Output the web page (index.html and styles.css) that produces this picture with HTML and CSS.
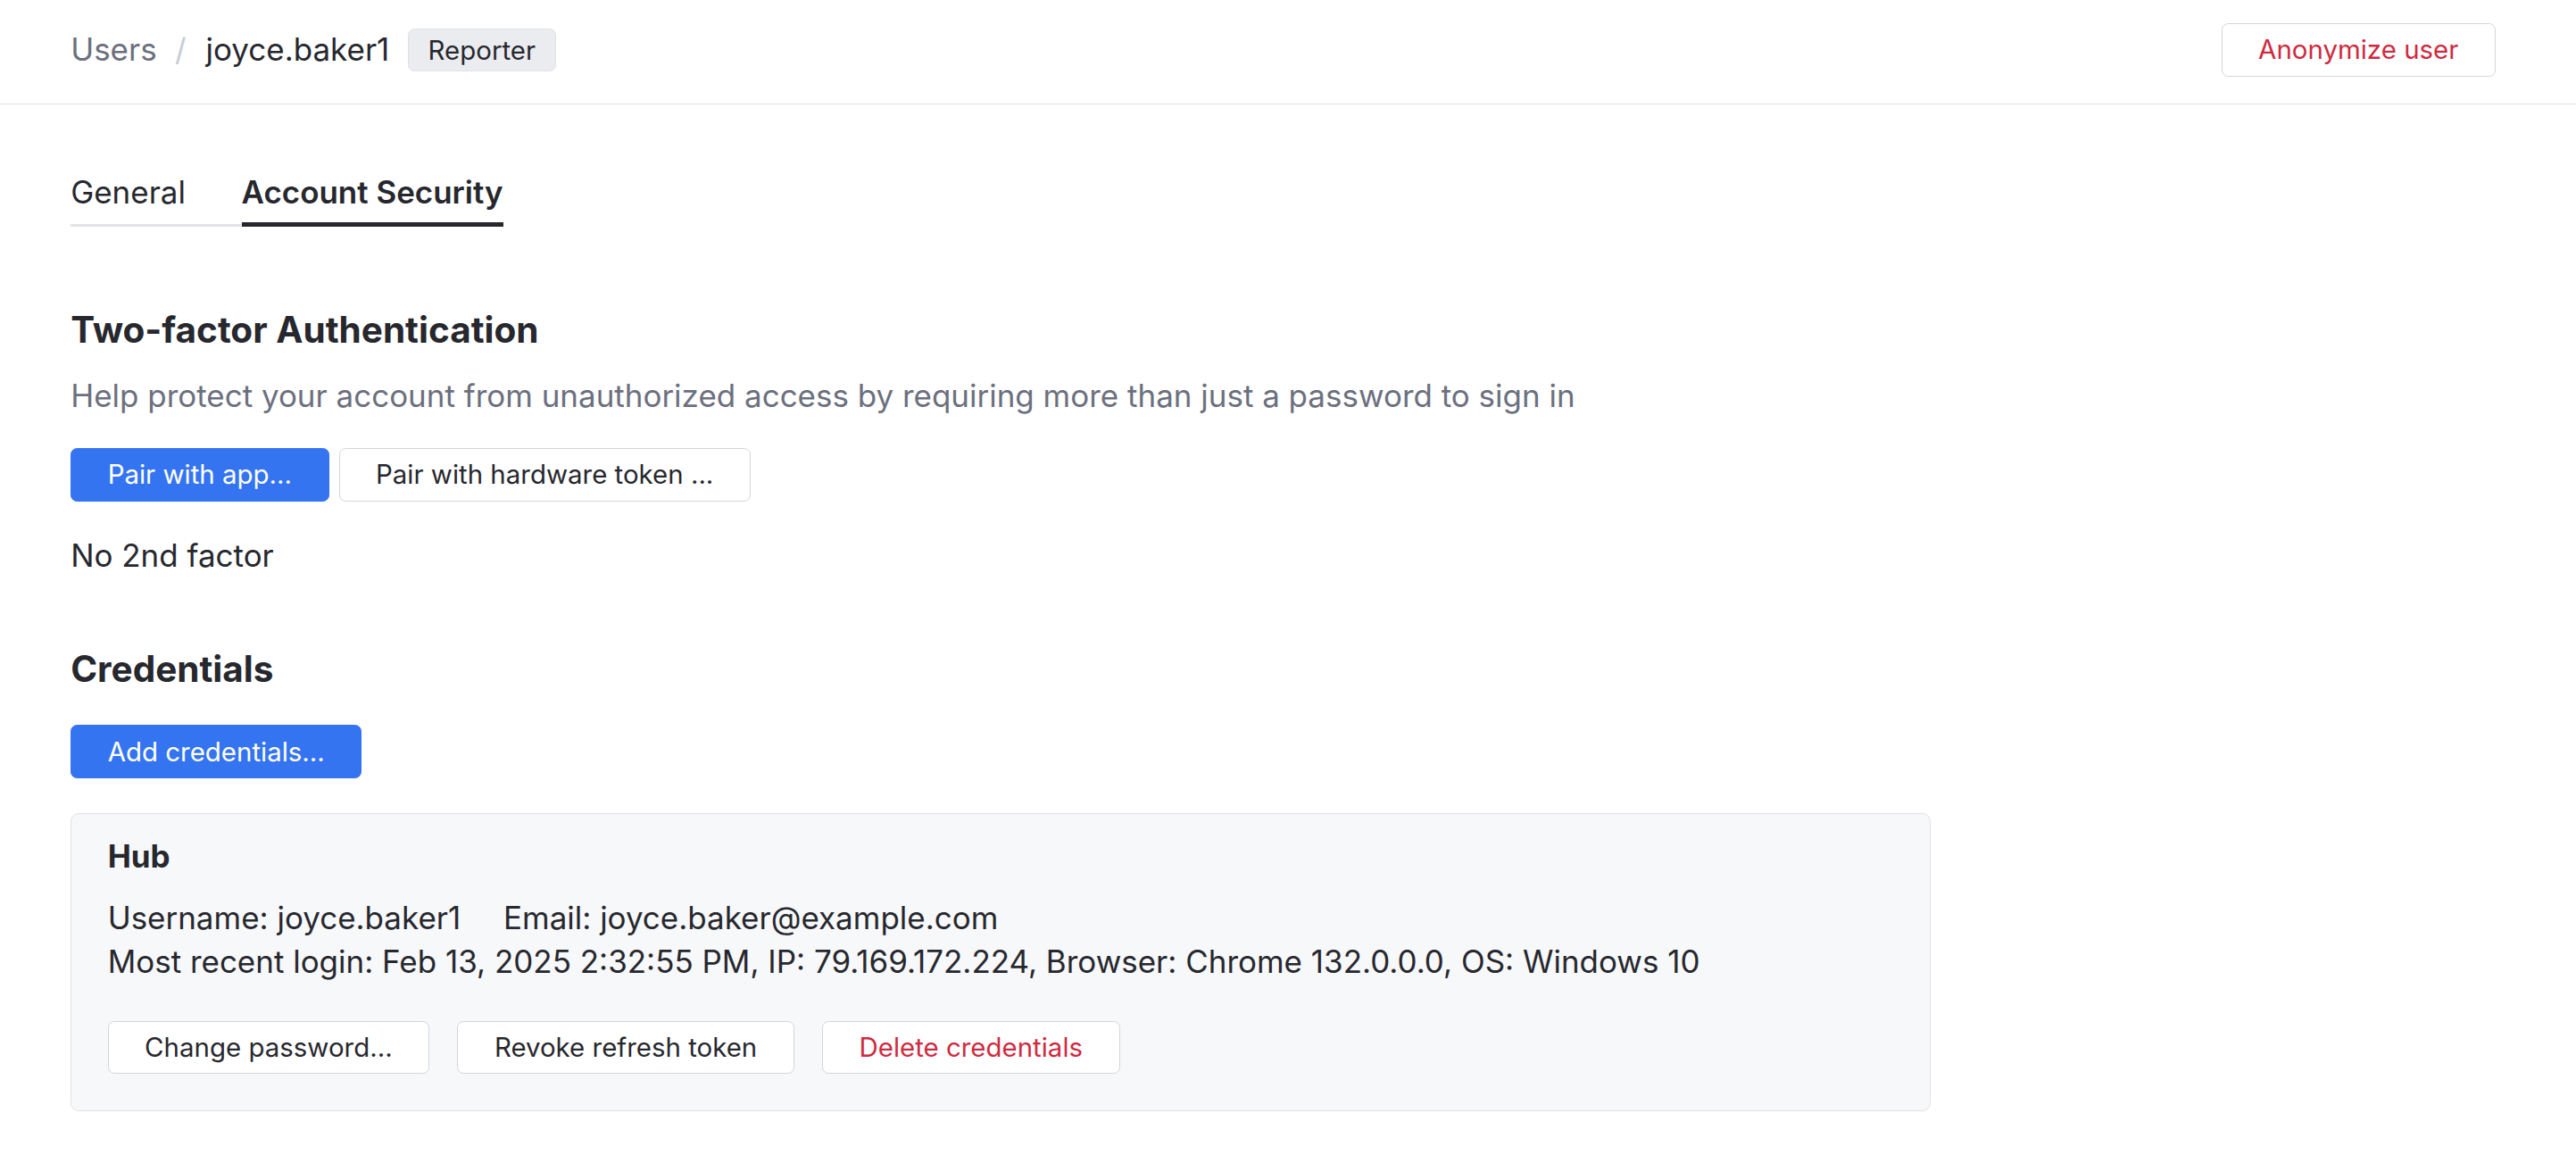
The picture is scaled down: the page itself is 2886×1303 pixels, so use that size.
FILE: index.html
```html
<!DOCTYPE html>
<html lang="en">
<head>
<meta charset="utf-8">
<title>joyce.baker1 — Account Security</title>
<link rel="stylesheet" href="styles.css">
</head>
<body>
<header class="topbar">
  <nav class="crumbs">
    <span class="crumb-link">Users</span>
    <span class="crumb-sep">/</span>
    <span class="crumb-current">joyce.baker1</span>
    <span class="badge">Reporter</span>
  </nav>
  <button class="btn btn-danger-outline">Anonymize user</button>
</header>
<main class="content">
  <div class="tabs">
    <span class="tab">General</span>
    <span class="tab tab-active">Account Security</span>
  </div>

  <section class="section section-2fa">
    <h2 class="section-title">Two-factor Authentication</h2>
    <p class="section-hint">Help protect your account from unauthorized access by requiring more than just a password to sign in</p>
    <div class="btn-row btn-row-tight">
      <button class="btn btn-primary">Pair with app...</button>
      <button class="btn">Pair with hardware token ...</button>
    </div>
    <p class="status">No 2nd factor</p>
  </section>

  <section class="section section-creds">
    <h2 class="section-title">Credentials</h2>
    <div class="btn-row">
      <button class="btn btn-primary">Add credentials...</button>
    </div>
    <div class="card">
      <h3 class="card-title">Hub</h3>
      <div class="card-line"><span class="field">Username: joyce.baker1</span><span class="field">Email: joyce.baker@example.com</span></div>
      <div class="card-line">Most recent login: Feb 13, 2025 2:32:55 PM, IP: 79.169.172.224, Browser: Chrome 132.0.0.0, OS: Windows 10</div>
      <div class="btn-row btn-row-wide card-actions">
        <button class="btn">Change password...</button>
        <button class="btn">Revoke refresh token</button>
        <button class="btn btn-danger-text">Delete credentials</button>
      </div>
    </div>
  </section>
</main>
</body>
</html>
```

FILE: styles.css
```css
html {
  zoom: 1.8406;
}
body {
  margin: 0;
  background: #ffffff;
  color: #27282e;
  font-family: Inter, "Noto Sans", sans-serif;
  font-size: 19px;
  line-height: 28px;
}
.topbar {
  height: 63.5px;
  box-sizing: border-box;
  border-bottom: 1px solid #dfe1e5;
  display: flex;
  align-items: center;
  justify-content: space-between;
  padding: 0 49px 2px 43px;
}
.crumbs {
  display: flex;
  align-items: center;
  font-size: 19px;
}
.crumb-link {
  color: #6c707e;
}
.crumb-sep {
  color: #c9ccd6;
  margin: 0 12px 0 11px;
}
.crumb-current {
  color: #27282e;
}
.badge {
  margin-left: 11px;
  font-size: 16px;
  line-height: 25px;
  padding: 0 12px;
  background: #ebecf0;
  border: 1px solid #dfe1e5;
  border-radius: 4px;
  color: #27282e;
}
.btn {
  font-family: inherit;
  font-size: 16px;
  line-height: 30px;
  height: 32.5px;
  padding: 0 22px;
  background: #ffffff;
  color: #27282e;
  border: 1px solid #d3d5db;
  border-radius: 4px;
  cursor: pointer;
  box-sizing: border-box;
}
.btn-primary {
  background: #3574f0;
  border-color: #3574f0;
  color: #ffffff;
}
.btn-danger-outline,
.btn-danger-text {
  color: #cf2a3f;
}
.content {
  padding: 0 43px;
}
.tabs {
  display: inline-flex;
  gap: 34px;
  margin-top: 41px;
  border-bottom: 2px solid #e4e5ea;
}
.tab {
  font-size: 19px;
  line-height: 26px;
  padding-bottom: 6px;
  margin-bottom: -2px;
  border-bottom: 2px solid transparent;
  color: #27282e;
}
.tab-active {
  font-weight: 600;
  padding-bottom: 5px;
  border-bottom: 3px solid #27282e;
}
.section-2fa {
  margin-top: 49px;
}
.section-title {
  margin: 0;
  font-size: 22px;
  line-height: 28px;
  font-weight: 700;
}
.section-hint {
  margin: 12px 0 0;
  font-size: 19px;
  line-height: 28px;
  color: #6c707e;
}
.btn-row {
  display: flex;
  gap: 17px;
}
.btn-row-tight {
  gap: 6px;
  margin-top: 18px;
}
.status {
  margin: 19px 0 0;
  font-size: 19px;
  line-height: 28px;
}
.section-creds {
  margin-top: 41px;
}
.section-creds > .btn-row {
  margin-top: 20px;
}
.card {
  margin-top: 21px;
  width: 1132px;
  box-sizing: border-box;
  background: #f7f8fa;
  border: 1px solid #dfe1e5;
  border-radius: 5px;
  padding: 13px 22px 22px;
}
.card-title {
  margin: 0;
  font-size: 19px;
  line-height: 26px;
  font-weight: 700;
}
.card-line {
  font-size: 19px;
  line-height: 27px;
}
.card-title + .card-line {
  margin-top: 11px;
}
.field + .field {
  margin-left: 26px;
}
.card-actions {
  margin-top: 22px;
}
```
